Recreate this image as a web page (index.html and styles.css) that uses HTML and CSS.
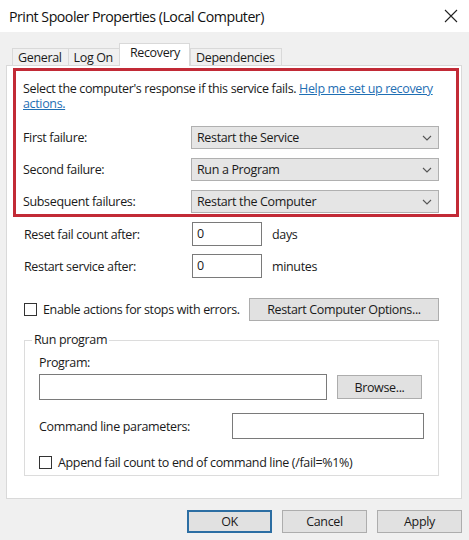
FILE: index.html
```html
<!DOCTYPE html>
<html>
<head>
<meta charset="utf-8">
<link rel="stylesheet" href="styles.css">
</head>
<body>
<div class="window">
  <div class="titlebar">
    <span class="title">Print Spooler Properties (Local Computer)</span>
    <svg class="close" width="14" height="14" viewBox="0 0 14 14"><path d="M1 1L13 13M13 1L1 13" stroke="#222" stroke-width="1.1" fill="none"/></svg>
  </div>
  <div class="tabs">
    <div class="tab">General</div>
    <div class="tab">Log On</div>
    <div class="tab active">Recovery</div>
    <div class="tab">Dependencies</div>
  </div>
  <div class="panel">
    <div class="highlight">
      <p class="intro"><span>Select the computer's response if this service fails. </span><a href="#">Help me set up recovery actions.</a></p>
      <div class="row combo-row"><span class="label">First failure:</span><div class="combo">Restart the Service<svg class="chev" width="10" height="6" viewBox="0 0 10 6"><path d="M1 1L5 5L9 1" stroke="#555" stroke-width="1.1" fill="none"/></svg></div></div>
      <div class="row combo-row"><span class="label">Second failure:</span><div class="combo">Run a Program<svg class="chev" width="10" height="6" viewBox="0 0 10 6"><path d="M1 1L5 5L9 1" stroke="#555" stroke-width="1.1" fill="none"/></svg></div></div>
      <div class="row combo-row"><span class="label">Subsequent failures:</span><div class="combo">Restart the Computer<svg class="chev" width="10" height="6" viewBox="0 0 10 6"><path d="M1 1L5 5L9 1" stroke="#555" stroke-width="1.1" fill="none"/></svg></div></div>
    </div>
    <div class="row num-row first-num"><span class="label">Reset fail count after:</span><div class="input small">0</div><span class="unit">days</span></div>
    <div class="row num-row"><span class="label">Restart service after:</span><div class="input small">0</div><span class="unit">minutes</span></div>
    <div class="row opt-row">
      <label class="check"><span class="box"></span>Enable actions for stops with errors.</label>
      <div class="btn wide">Restart Computer Options...</div>
    </div>
    <fieldset class="group">
      <legend>Run program</legend>
      <div class="prog-label">Program:</div>
      <div class="prog-row"><div class="input prog"></div><div class="btn browse">Browse...</div></div>
      <div class="cmd-row"><span>Command line parameters:</span><div class="input cmd"></div></div>
      <label class="check append"><span class="box"></span>Append fail count to end of command line (/fail=%1%)</label>
    </fieldset>
  </div>
  <div class="buttons">
    <div class="btn dlg default">OK</div>
    <div class="btn dlg">Cancel</div>
    <div class="btn dlg">Apply</div>
  </div>
</div>
</body>
</html>
```
FILE: styles.css
```css
* { box-sizing: border-box; }
html, body { margin: 0; padding: 0; }
body {
  width: 469px;
  height: 540px;
  background: #f0f0f0;
  font-family: "Open Sans", "Noto Sans", sans-serif;
  font-size: 12.5px;
  letter-spacing: -0.35px;
  color: #1a1a1a;
  overflow: hidden;
}
.window { width: 469px; height: 540px; display: flex; flex-direction: column; }
.titlebar {
  height: 32px;
  background: #fff;
  display: flex;
  align-items: center;
  justify-content: space-between;
  padding: 0 11px 0 9px;
}
.title { font-size: 14.2px; letter-spacing: -0.5px; color: #111; }
.close { display: block; }
.tabs {
  display: flex;
  align-items: flex-end;
  height: 33px;
  padding-left: 12px;
}
.tab {
  height: 18px;
  margin-bottom: -1px;
  padding: 0 6px 0 5px;
  border: 1px solid #d9d9d9;
  border-bottom: none;
  background: #f0f0f0;
  line-height: 17px;
  margin-right: -1px;
}
.tab.active {
  height: 23px;
  background: #fff;
  position: relative;
  z-index: 1;
  padding: 0 9px 0 10px;
  margin: 0 0 -1px 0;
  line-height: 18px;
}
.panel {
  margin: 0 7px 0 6px;
  height: 434px;
  background: #fff;
  border: 1px solid #d9d9d9;
  padding-top: 2px;
}
.highlight {
  margin: 0 2px 0 6px;
  border: 3px solid #c22a36;
  padding: 10px 17px 1px 7px;
}
.intro { margin: 0 0 15px; line-height: 15px; }
.intro a { color: #1f6fb4; text-decoration: underline; }
.row { display: flex; align-items: center; }
.label { width: 168px; flex: none; }
.combo-row { margin-bottom: 9px; }
.combo-row:last-child { margin-bottom: 0; }
.combo {
  flex: 1;
  height: 23px;
  background: #e5e5e5;
  border: 1px solid #b0b0b0;
  display: flex;
  align-items: center;
  justify-content: space-between;
  padding: 0 6px 0 5px;
}
.chev { display: block; }
.num-row { margin: 0 0 8px 17px; height: 24px; }
.first-num { margin-top: 5px; }
.input { background: #fff; border: 1px solid #7a7a7a; }
.input.small { width: 70px; height: 24px; padding: 2px 4px; line-height: 18px; }
.unit { margin-left: 10px; }
.opt-row { margin: 20px 0 0 17px; justify-content: space-between; width: 415px; }
.check { display: flex; align-items: center; }
.box { width: 13px; height: 13px; border: 1px solid #333; background: #fff; margin-right: 6px; flex: none; }
.btn {
  background: #e1e1e1;
  border: 1px solid #adadad;
  display: flex;
  align-items: center;
  justify-content: center;
}
.btn.wide { width: 190px; height: 23px; }
.group {
  margin: 12px 0 0 17px;
  width: 415px;
  height: 143px;
  border: 1px solid #dcdcdc;
  border-radius: 0;
  padding: 0 0 0 14px;
}
.group legend { padding: 0 2px; margin-left: -7px; line-height: 14px; }
.prog-label { margin-top: 8px; line-height: 15px; }
.prog-row { display: flex; align-items: center; margin-top: 4px; }
.input.prog { width: 288px; height: 26px; }
.btn.browse { width: 85px; height: 24px; margin-left: 10px; }
.cmd-row { display: flex; align-items: center; justify-content: space-between; width: 385px; margin-top: 13px; }
.input.cmd { width: 192px; height: 26px; }
.append { margin-top: 15px; }
.buttons {
  display: flex;
  justify-content: flex-end;
  gap: 10px;
  padding: 11px 7px 0 0;
}
.btn.dlg { width: 85px; height: 23px; }
.btn.default { border: 2px solid #2c6ea3; }
```
